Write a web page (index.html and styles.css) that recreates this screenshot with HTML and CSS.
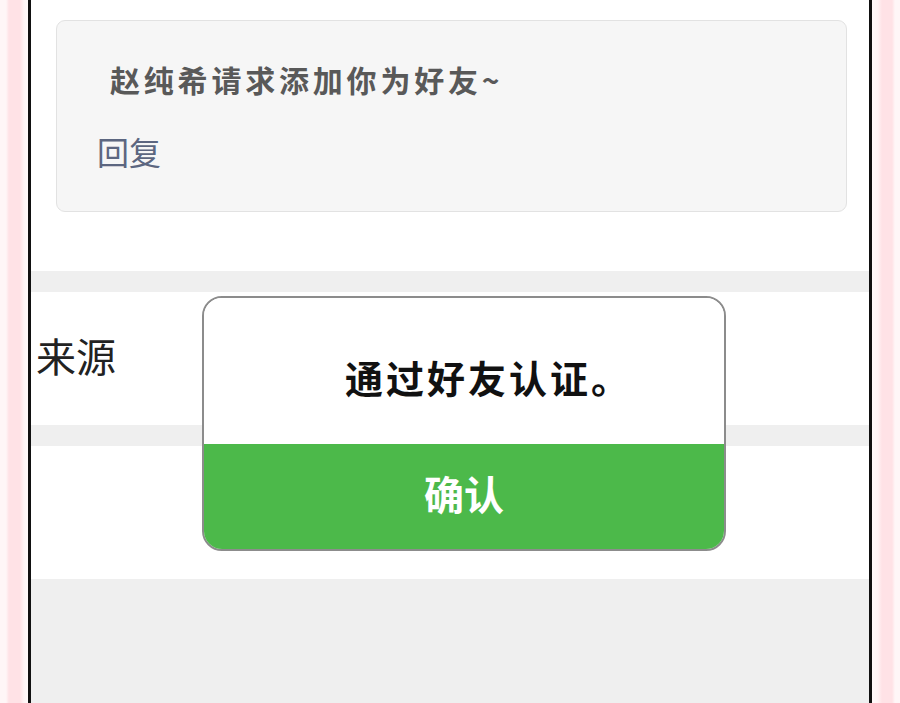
FILE: index.html
```html
<!DOCTYPE html>
<html lang="zh">
<head>
<meta charset="utf-8">
<link rel="stylesheet" href="styles.css">
</head>
<body>
<div class="frame">
  <div class="side side-left"></div>
  <div class="phone">
    <section class="top">
      <div class="card">
        <p class="request">赵纯希请求添加你为好友~</p>
        <p class="reply">回复</p>
      </div>
    </section>
    <div class="band"></div>
    <section class="row"><span class="label">来源</span></section>
    <div class="band"></div>
    <section class="row"></section>
    <div class="rest"></div>
    <div class="dialog">
      <div class="dialog-body">通过好友认证。</div>
      <div class="dialog-btn">确认</div>
    </div>
  </div>
  <div class="side side-right"></div>
</div>
</body>
</html>
```
FILE: styles.css
```css
html, body {
  margin: 0;
  padding: 0;
  height: 100%;
  overflow: hidden;
  font-family: "Noto Sans CJK SC", "Noto Sans", sans-serif;
}
.frame {
  display: flex;
  height: 703px;
  width: 900px;
}
.side {
  width: 28px;
  flex: none;
}
.side-left {
  background: linear-gradient(to right, #fff6f7 0, #fff6f7 6px, #ffe2e6 9px, #ffe2e6 20px, #fff4f5 24px, #fffafa 28px);
}
.side-right {
  background: linear-gradient(to right, #fffafa 0, #fff4f5 6px, #ffe2e6 10px, #ffe2e6 20px, #fff6f7 23px, #fff6f7 28px);
}
.phone {
  flex: 1;
  position: relative;
  border-left: 3px solid #111;
  border-right: 3px solid #111;
  background: #fff;
  display: flex;
  flex-direction: column;
}
.top {
  height: 271px;
  padding: 20px 22px 0 25px;
  box-sizing: border-box;
}
.card {
  height: 192px;
  box-sizing: border-box;
  background: #f6f6f6;
  border: 1px solid #e2e2e2;
  border-radius: 9px;
  padding: 36px 0 0 40px;
}
.request {
  margin: 0 0 0 13px;
  font-size: 30px;
  line-height: 44px;
  font-weight: 700;
  color: #595959;
  letter-spacing: 3.8px;
}
.reply {
  margin: 28px 0 0 0;
  font-size: 32px;
  line-height: 44px;
  color: #5c6680;
}
.band {
  height: 21px;
  background: #efefef;
}
.row {
  height: 133px;
  display: flex;
  align-items: center;
  padding-left: 5px;
}
.label {
  font-size: 40px;
  color: #222;
  position: relative;
  top: -4px;
}
.rest {
  flex: 1;
  background: #efefef;
}
.dialog {
  position: absolute;
  left: 171px;
  top: 296px;
  width: 524px;
  height: 255px;
  border: 2px solid #8c8c8c;
  border-radius: 20px;
  overflow: hidden;
  box-sizing: border-box;
  display: flex;
  flex-direction: column;
}
.dialog-body {
  height: 146px;
  background: #fff;
  display: flex;
  align-items: center;
  justify-content: flex-start;
  font-size: 38px;
  font-weight: 700;
  color: #111;
  letter-spacing: 3px;
  padding-left: 141px;
  padding-top: 10px;
  box-sizing: border-box;
}
.dialog-btn {
  flex: 1;
  background: #4cb94a;
  color: #fff;
  display: flex;
  align-items: center;
  justify-content: center;
  font-size: 40px;
  font-weight: 700;
  padding-bottom: 8px;
}
```
